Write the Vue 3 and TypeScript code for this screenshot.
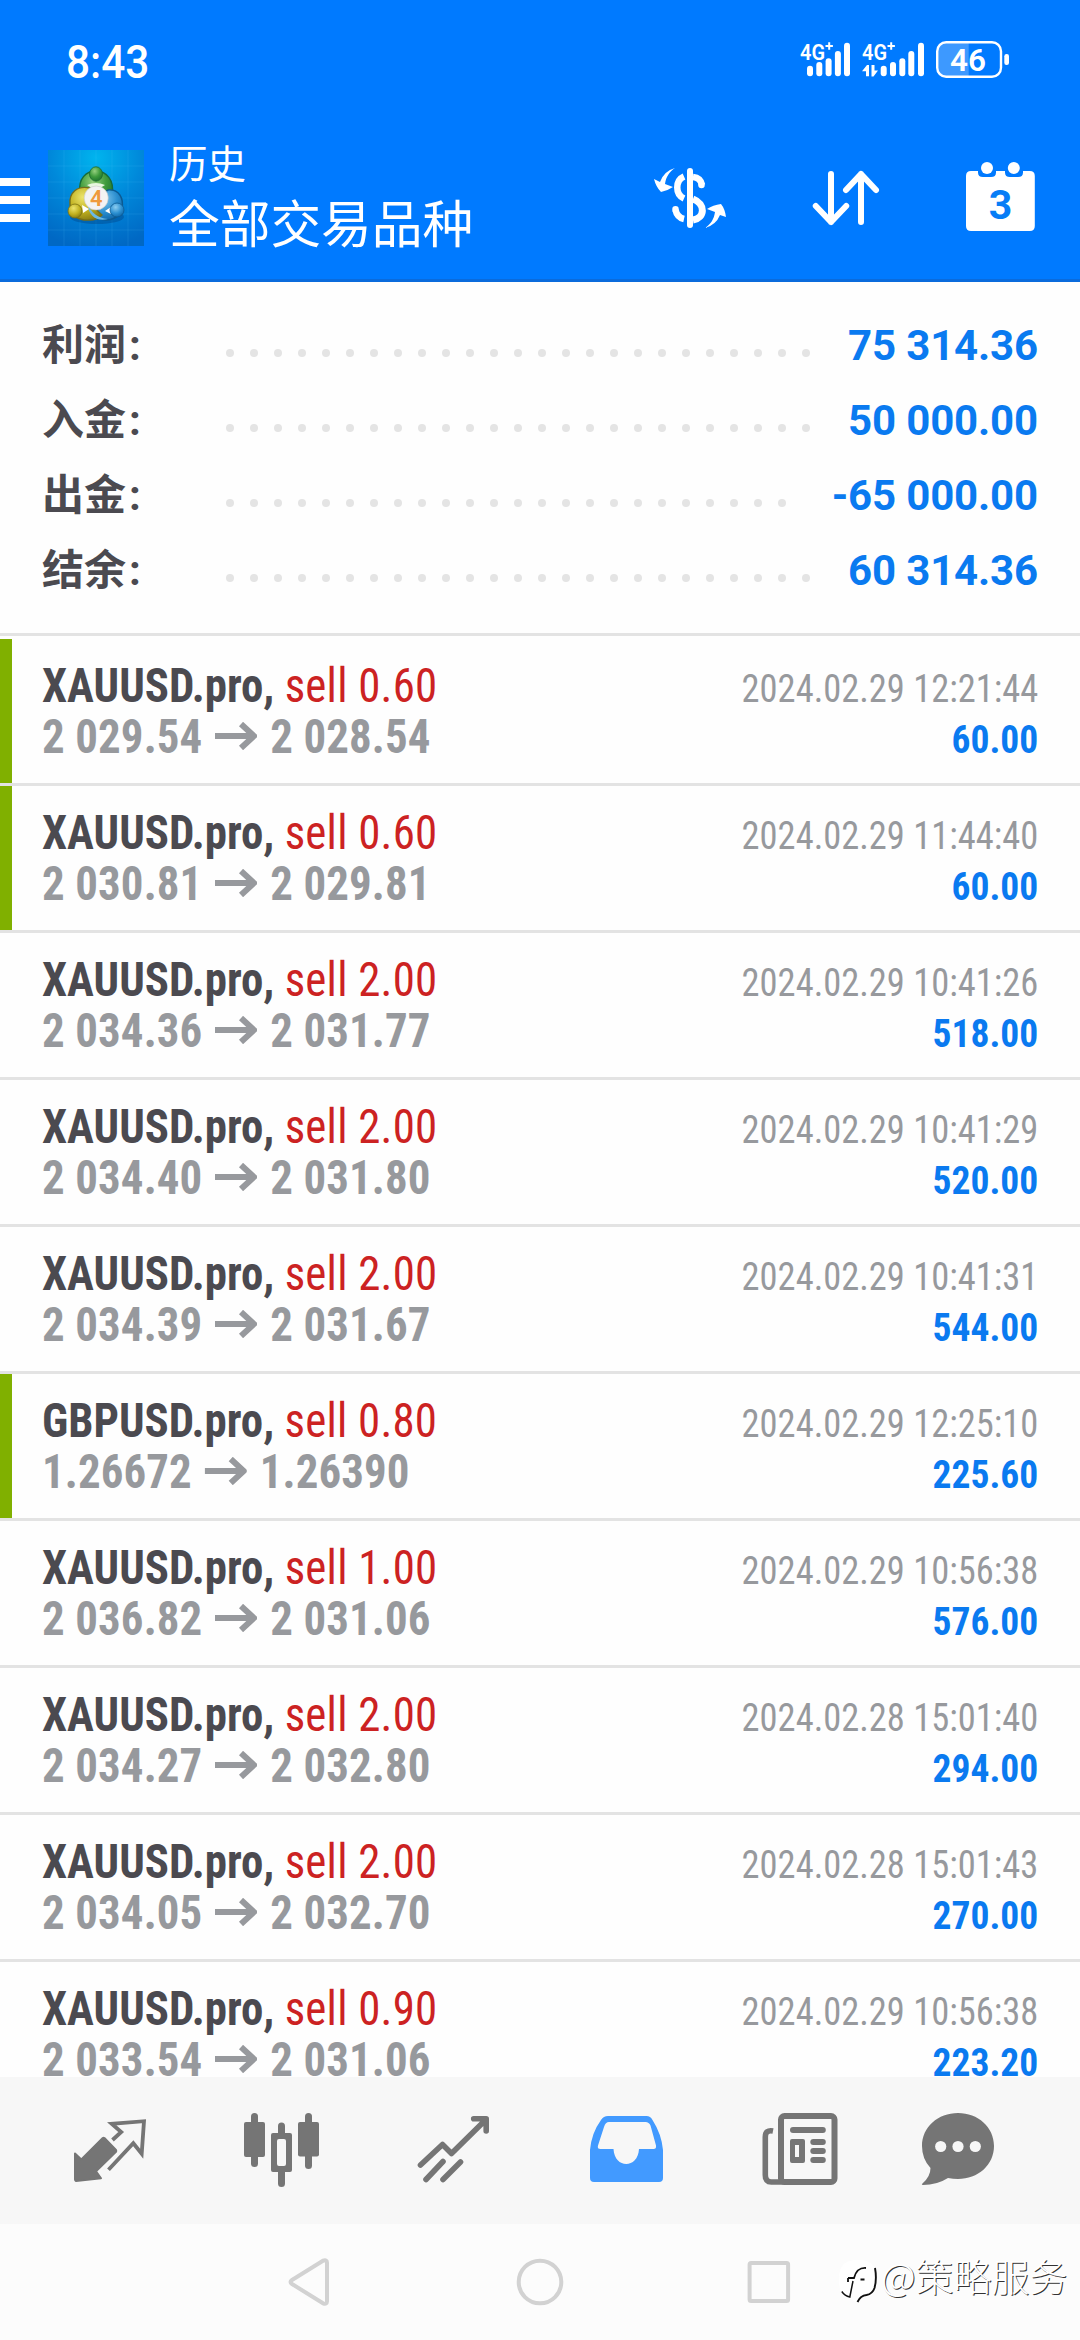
<script setup lang="ts">
interface SummaryLine {
  label: string
  value: string
  dots: number
}

interface Deal {
  symbol: string
  side: string
  open: string
  close: string
  time: string
  profit: string
  marked?: boolean
}

const summary: SummaryLine[] = [
  { label: '利润', value: '75 314.36', dots: 25 },
  { label: '入金', value: '50 000.00', dots: 25 },
  { label: '出金', value: '-65 000.00', dots: 24 },
  { label: '结余', value: '60 314.36', dots: 25 },
]

const deals: Deal[] = [
  { symbol: 'XAUUSD.pro,', side: 'sell 0.60', open: '2 029.54', close: '2 028.54', time: '2024.02.29 12:21:44', profit: '60.00', marked: true },
  { symbol: 'XAUUSD.pro,', side: 'sell 0.60', open: '2 030.81', close: '2 029.81', time: '2024.02.29 11:44:40', profit: '60.00', marked: true },
  { symbol: 'XAUUSD.pro,', side: 'sell 2.00', open: '2 034.36', close: '2 031.77', time: '2024.02.29 10:41:26', profit: '518.00' },
  { symbol: 'XAUUSD.pro,', side: 'sell 2.00', open: '2 034.40', close: '2 031.80', time: '2024.02.29 10:41:29', profit: '520.00' },
  { symbol: 'XAUUSD.pro,', side: 'sell 2.00', open: '2 034.39', close: '2 031.67', time: '2024.02.29 10:41:31', profit: '544.00' },
  { symbol: 'GBPUSD.pro,', side: 'sell 0.80', open: '1.26672', close: '1.26390', time: '2024.02.29 12:25:10', profit: '225.60', marked: true },
  { symbol: 'XAUUSD.pro,', side: 'sell 1.00', open: '2 036.82', close: '2 031.06', time: '2024.02.29 10:56:38', profit: '576.00' },
  { symbol: 'XAUUSD.pro,', side: 'sell 2.00', open: '2 034.27', close: '2 032.80', time: '2024.02.28 15:01:40', profit: '294.00' },
  { symbol: 'XAUUSD.pro,', side: 'sell 2.00', open: '2 034.05', close: '2 032.70', time: '2024.02.28 15:01:43', profit: '270.00' },
  { symbol: 'XAUUSD.pro,', side: 'sell 0.90', open: '2 033.54', close: '2 031.06', time: '2024.02.29 10:56:38', profit: '223.20' },
]
</script>

<template>
  <div class="screen">
    <header class="header">
      <div class="status">
        <span class="clock">8:43</span>
        <svg class="status-icons" viewBox="796 36 220 46" width="220" height="46">
          <g fill="#fff">
            <text class="net" x="800" y="59.5" textLength="25" lengthAdjust="spacingAndGlyphs">4G</text>
            <path d="M825.5 46h7.4M829.2 42.3v7.4" stroke="#fff" stroke-width="2" />
            <text class="net" x="862" y="59.5" textLength="25" lengthAdjust="spacingAndGlyphs">4G</text>
            <path d="M887.5 46h7.4M891.2 42.3v7.4" stroke="#fff" stroke-width="2" />
            <path d="M869 76.3h-3v-5h-4l5-6.3h2zM871.5 65h3v5.500h3.500l-4.500 6h-2z" />
            <rect x="807" y="65.700" width="6" height="10.600" rx="3" />
            <rect x="816.300" y="62" width="6" height="14.300" rx="3" />
            <rect x="825.600" y="58.300" width="6" height="18" rx="3" />
            <rect x="834.900" y="51" width="6" height="25.300" rx="3" />
            <rect x="844" y="42.700" width="6" height="33.600" rx="3" />
            <rect x="880.700" y="65.700" width="6" height="10.600" rx="3" />
            <rect x="890" y="62" width="6" height="14.300" rx="3" />
            <rect x="899.300" y="58.300" width="6" height="18" rx="3" />
            <rect x="908.300" y="51" width="6" height="25.300" rx="3" />
            <rect x="918" y="42.700" width="6" height="33.600" rx="3" />
            <path d="M946 42h22.700v35H946q-9-1-9-9V51q0-8 9-9z" fill="#3d99ff" />
            <rect x="937.200" y="42.200" width="63.800" height="34.600" rx="9" fill="none" stroke="#fff" stroke-width="2.400" />
            <rect x="1004.300" y="54" width="4.700" height="11" rx="2.200" />
            <text class="battery" x="950" y="71" textLength="36" lengthAdjust="spacingAndGlyphs">46</text>
          </g>
        </svg>
      </div>
      <div class="bar">
        <svg class="menu" viewBox="0 0 30 44" width="30" height="44">
          <path d="M0 0h30v8H0zM0 18h30v8H0zM0 36h30v8H0z" fill="#fff" />
        </svg>
        <svg class="logo" viewBox="0 0 96 96" width="96" height="96">
          <defs>
            <radialGradient id="sky" cx=".5" cy=".08" r=".95">
              <stop offset="0" stop-color="#00b4ee" />
              <stop offset=".5" stop-color="#0088da" />
              <stop offset="1" stop-color="#0068c4" />
            </radialGradient>
            <radialGradient id="green" cx=".4" cy=".3" r=".8">
              <stop offset="0" stop-color="#95d07e" />
              <stop offset=".5" stop-color="#3f9b3c" />
              <stop offset="1" stop-color="#176b2c" />
            </radialGradient>
            <radialGradient id="yellow" cx=".4" cy=".3" r=".8">
              <stop offset="0" stop-color="#ece46c" />
              <stop offset=".55" stop-color="#c0b01e" />
              <stop offset="1" stop-color="#7a7012" />
            </radialGradient>
            <radialGradient id="blue" cx=".4" cy=".3" r=".8">
              <stop offset="0" stop-color="#8ccdf0" />
              <stop offset=".55" stop-color="#2b8fd0" />
              <stop offset="1" stop-color="#0b5d9e" />
            </radialGradient>
          </defs>
          <rect width="96" height="96" fill="url(#sky)" />
          <path d="M16 0v96M32 0v96M48 0v96M64 0v96M80 0v96M0 16h96M0 32h96M0 48h96M0 64h96M0 80h96" stroke="#5fd0ff" stroke-opacity=".18" stroke-width=".8" />
          <ellipse cx="49" cy="67" rx="27" ry="7" fill="#003a78" opacity=".35" />
          <path d="M32 42C30 29 38 21 48 21s19 9 16 24c-1 6-4 9-8 11L40 40z" fill="url(#green)" stroke="#176b3a" stroke-width="1.400" />
          <path d="M39 35q9-4 18 0l-5 3h-8z" fill="#e8f7e0" />
          <path d="M60 40c11-1 16 8 14 19-2 9-14 14-24 9-6-3-9-8-9-13z" fill="url(#blue)" stroke="#0c5a92" stroke-width="1.400" />
          <path d="M42 38c-13-3-21 5-20 16 0 12 9 17 20 16 5 0 9-2 12-5L38 50z" fill="url(#yellow)" stroke="#746d1c" stroke-width="1.400" />
          <path d="M40 54c3 9 10 14 20 15-11 3-20-3-20-15z" fill="#69b9e6" />
          <path d="M34 55l7 4-6 4zM57 61l6-4v7z" fill="#fff" />
          <ellipse cx="48" cy="24" rx="6.500" ry="7.200" fill="url(#green)" stroke="#1a6b30" stroke-width=".8" />
          <circle cx="27" cy="61" r="7" fill="url(#yellow)" stroke="#7b7112" stroke-width=".8" />
          <circle cx="69" cy="60" r="7" fill="url(#blue)" stroke="#0c5a92" stroke-width=".8" />
          <circle cx="48.200" cy="48" r="12" fill="#f3f3f3" stroke="#c9c9c9" stroke-width=".6" />
          <text x="42" y="56" class="logo-digit">4</text>
        </svg>
        <div class="titles">
          <span class="small">历史</span>
          <span class="big">全部交易品种</span>
        </div>
        <svg class="actions" viewBox="650 155 390 85" width="390" height="85">
          <g fill="none" stroke="#fff">
            <path d="M690 171v54" stroke-width="6" stroke-linecap="round" />
            <path d="M684 176.500c-9 4-9 18 0 22" stroke-width="6.500" />
            <path d="M693 177c5 .5 8 3 9 8" stroke-width="6.500" />
            <path d="M701.500 184.700v.3M675.500 209.500v-.3" stroke-width="6.500" stroke-linecap="round" />
            <path d="M693 199c13 5 12 19 0 21" stroke-width="7" />
            <path d="M675.500 210c1 4.500 4 8 8.500 9" stroke-width="6.500" />
          </g>
          <path d="M675 168c-6 4-9 9-10 16l8 3q-6 4-12 5-5-5-7-13l6 3q4-11 15-14z" fill="#fff" />
          <path d="M705 228c6-4 9-9 10-16l-8-3q6-4 14-5 4 5 5 13l-6-2q-4 10-15 13z" fill="#fff" />
          <path d="M831 174v48M815.800 206l15.200 16 15.200-16M861 222v-48M846 190l15-16 15 16" fill="none" stroke="#fff" stroke-width="6" stroke-linecap="round" stroke-linejoin="round" />
          <path d="M971 171h7v1.500q0 4.500 5 4.500h8q5 0 5-4.500V171h9v1.500q0 4.500 5 4.500h8q5 0 5-4.500V171h6.800q5 0 5 5v50q0 5-5 5H971q-5 0-5-5v-50q0-5 5-5z" fill="#fff" />
          <circle cx="987" cy="168" r="6" fill="#fff" />
          <circle cx="1013.800" cy="168" r="6" fill="#fff" />
          <text x="1000.600" y="218.500" text-anchor="middle" class="day">3</text>
        </svg>
      </div>
    </header>

    <section class="summary">
      <div v-for="line in summary" :key="line.label" class="sum-line">
        <span class="sum-label">{{ line.label }}<span class="colon">:</span></span>
        <span class="dots"><i v-for="n in line.dots" :key="n" class="dot"></i></span>
        <span class="sum-value">{{ line.value }}</span>
      </div>
    </section>

    <main class="list">
      <div v-for="(deal, i) in deals" :key="i" class="deal" :class="{ marked: deal.marked }">
        <div class="left">
          <div class="line"><b>{{ deal.symbol }}</b> <span class="side">{{ deal.side }}</span></div>
          <div class="line price">
            <span>{{ deal.open }}</span>
            <svg class="arrow" viewBox="0 0 42 28" preserveAspectRatio="none" width="45" height="28">
              <path d="M0 14h38M26 2l13 12-13 12" fill="none" stroke="#97999d" stroke-width="6" />
            </svg>
            <span>{{ deal.close }}</span>
          </div>
        </div>
        <div class="right">
          <div class="line time">{{ deal.time }}</div>
          <div class="line profit">{{ deal.profit }}</div>
        </div>
      </div>
    </main>

    <nav class="tabs">
      <svg viewBox="0 2077 1080 147" width="1080" height="147">
        <g fill="#757575" stroke="#757575">
          <path d="M75 2153.500l6.300 6 21.500-21.500q.8-.6 1.600 0l11.600 12q.6 1 0 1.800l-20 19.500 5 7-25 2.700q-1-.3-1-1.500z" stroke-width="2" stroke-linejoin="round" />
          <path d="M112.500 2140l8.700-8-9.500-8.200 32.300-2.600-2.300 32.500-8.400-10.500-24.800 26.500" fill="none" stroke-width="3.800" />
        </g>
        <g fill="#757575">
          <rect x="244" y="2122" width="21" height="35" rx="2" />
          <rect x="251" y="2113" width="7" height="54" rx="3.500" />
          <rect x="298" y="2122" width="21" height="34.500" rx="2" />
          <rect x="305" y="2113" width="7" height="56" rx="3.500" />
          <path d="M278 2134v-8q0-3.500 3.500-3.500t3.500 3.500v8zM278 2171h7v12.500q0 3.500-3.500 3.500t-3.500-3.500z" />
          <path fill-rule="evenodd" d="M273 2133h17q2 0 2 2v35q0 2-2 2h-17q-2 0-2-2v-35q0-2 2-2zM279 2139q-2 0-2 2v23q0 2 2 2h5q2 0 2-2v-23q0-2-2-2z" />
        </g>
        <path d="M420.500 2165l22-20.500 9 9 34.500-34M473.700 2118.700h12.500V2131M426 2179.500l17-18M443 2179.500l17.500-17.500" fill="none" stroke="#757575" stroke-width="5.600" stroke-linecap="round" stroke-linejoin="round" />
        <path d="M608 2116h38.500q4 0 6 4 9 14 10.500 30v28q0 4-4 4h-65q-4 0-4-4v-28q1.500-17 11-30 2.500-4 7-4z" fill="#429aff" />
        <path d="M609 2122h36.500q3.500 0 5 3.500l5.500 20q.5 3.500-2.500 3.500H639c-1 20-24.500 20-25.500 0h-13q-3.500 0-2.500-3.500l6-18.500q1.500-5 5-5z" fill="#f7f7f7" />
        <g fill="none" stroke="#757575">
          <rect x="781" y="2116" width="53.500" height="66" rx="3.500" stroke-width="6" />
          <path d="M773 2131q-7.700-1.500-7.700 6v38q0 7 6 7h13" stroke-width="5.600" />
        </g>
        <g fill="#757575">
          <rect x="790" y="2127" width="35.800" height="6" rx="3" />
          <path fill-rule="evenodd" d="M792 2139h11q2 0 2 2v20q0 2-2 2h-11q-2 0-2-2v-20q0-2 2-2zM795 2145v12h4v-12z" />
          <rect x="810.300" y="2139" width="15.500" height="6" rx="3" />
          <rect x="810.300" y="2148" width="15.500" height="6" rx="3" />
          <rect x="810.300" y="2157" width="15.500" height="6" rx="3" />
          <path d="M958 2113c20 0 36 14 36 33s-16 33-36 33q-5 0-10-1-11 7-25 7-2-.4-.5-1.500 8-7 8-15.500-8.500-9-8.500-22c0-19 16-33 36-33z" />
        </g>
        <g fill="#f7f7f7">
          <circle cx="940.700" cy="2146.500" r="5.600" />
          <circle cx="958" cy="2146.500" r="5.600" />
          <circle cx="975.300" cy="2146.500" r="5.600" />
        </g>
      </svg>
    </nav>

    <footer class="system">
      <svg viewBox="280 2224 520 116" width="520" height="116">
        <g fill="none" stroke="#d2d2d2" stroke-width="4" stroke-linejoin="round">
          <path d="M292 2280l31-19.300q4-1.500 4 2v38.600q0 3.500-4 2l-31-19.300q-3-2 0-4z" />
          <circle cx="540" cy="2282" r="21.300" />
          <rect x="749.600" y="2263" width="38.500" height="38" rx="1.500" />
        </g>
      </svg>
      <div class="mark">
        <svg viewBox="838 2255 42 50" width="42" height="50">
          <path d="M858 2260c14 0 18 6 18 20s-4 17-10 17q-6 0-9 6l-8-5q-10-1-10-18c0-14 5-20 19-20z" fill="#fff" />
          <g fill="none" stroke="#111">
            <path d="M866 2268c-7-.5-10 3-12 10h-6M860.500 2279.500h4M848 2278v4" stroke-width="1.800" />
            <path d="M853 2281l-3.200 16q-5-1-8-5.500" stroke-width="1.500" />
            <path d="M875 2268q2 11-.5 20-2 6-8 7-6 .5-9 7" stroke-width="1.900" />
          </g>
        </svg>
        <span class="mark-text">@策略服务</span>
      </div>
    </footer>
  </div>
</template>

<style>
body {
  margin: 0;
  background: #fff;
}
</style>

<style scoped>
.screen {
  width: 1080px;
  height: 2340px;
  display: flex;
  flex-direction: column;
  overflow: hidden;
  background: #fefefe;
  font-family: Roboto, 'Noto Sans CJK SC', sans-serif;
}

.header {
  box-sizing: border-box;
  height: 282px;
  flex: none;
  background: #007aff;
  border-bottom: 3px solid #0a6bdc;
  color: #fff;
}

.status {
  display: flex;
  justify-content: space-between;
  height: 118px;
  padding: 36px 64px 0 66px;
  box-sizing: border-box;
}

.clock {
  font-size: 46px;
  line-height: 52px;
  font-weight: 460;
  transform: scaleX(0.92);
  transform-origin: left;
}

.net {
  font: 600 22px Roboto, sans-serif;
}

.battery {
  font: 600 32px Roboto, sans-serif;
}

.bar {
  display: flex;
  height: 161px;
  align-items: flex-start;
}

.menu {
  margin-top: 60px;
}

.logo {
  margin: 32px 0 0 18px;
}

.logo-digit {
  font: 600 22px Roboto, sans-serif;
  fill: #ef9a3c;
}

.titles {
  display: flex;
  flex-direction: column;
  margin: 22px 0 0 25px;
  width: 310px;
}

.small {
  font-size: 38.5px;
  line-height: 50px;
}

.big {
  margin-top: 1px;
  font-size: 50.7px;
  line-height: 70px;
  white-space: nowrap;
}

.actions {
  margin: 37px 0 0 171px;
}

.day {
  font: 700 41px Roboto, sans-serif;
  fill: #087df6;
}

.summary {
  box-sizing: border-box;
  height: 354px;
  flex: none;
  padding: 26px 42px 0;
  border-bottom: 3px solid #e3e3e3;
}

.sum-line {
  display: flex;
  align-items: center;
  height: 75px;
  font-size: 42px;
  font-weight: 700;
}

.sum-label {
  width: 184px;
  color: #4b4a50;
  line-height: 75px;
}

.colon {
  margin-left: 3px;
}

.dots {
  display: flex;
  gap: 16px;
  flex: 1;
  padding-top: 15px;
}

.dot {
  width: 8px;
  height: 8px;
  border-radius: 50%;
  background: #e4e4e4;
}

.sum-value {
  color: #0a7af0;
  line-height: 75px;
  letter-spacing: -0.15px;
}

.list {
  flex: none;
  height: 1438px;
  padding-top: 3px;
  overflow: hidden;
}

.deal {
  display: flex;
  justify-content: space-between;
  box-sizing: border-box;
  height: 147px;
  padding: 21px 42px 0;
  border-bottom: 3px solid #e3e3e3;
  font-family: 'Roboto Condensed', Roboto, sans-serif;
}

.deal.marked {
  background: linear-gradient(90deg, #80b000 12px, #fefefe 12px);
  background-clip: padding-box;
}

.left {
  font-size: 48px;
  color: #4b4a50;
  transform: scaleX(0.935);
  transform-origin: left;
}

.right {
  padding-top: 4px;
  font-size: 39px;
  text-align: right;
}

.line {
  height: 51px;
  line-height: 51px;
  white-space: nowrap;
}

.side {
  color: #cc2222;
  letter-spacing: 0.25px;
}

.price {
  display: flex;
  color: #97999d;
  font-weight: 700;
  letter-spacing: 0.12px;
}

.arrow {
  margin: 11px 14px 0 13.5px;
}

.time {
  color: #97999d;
  transform: scaleX(0.935);
  transform-origin: right;
}

.profit {
  color: #0a7af0;
  font-weight: 700;
  transform: scaleX(0.962);
  transform-origin: right;
}

.tabs {
  height: 147px;
  flex: none;
  background: #f7f7f7;
}

.tabs svg,
.system svg {
  display: block;
}

.system {
  display: flex;
  height: 116px;
  padding-left: 280px;
  background: #fcfcfc;
}

.mark {
  display: flex;
  align-items: flex-start;
  margin-left: 38px;
  padding-top: 31px;
}

.mark-text {
  margin-left: 1px;
  margin-top: -3px;
  font-family: 'Noto Sans CJK SC', sans-serif;
  font-size: 38px;
  line-height: 46px;
  color: #fff;
  font-weight: 300;
  text-shadow: 1px 1px 0.5px #333;
  white-space: nowrap;
}
</style>
